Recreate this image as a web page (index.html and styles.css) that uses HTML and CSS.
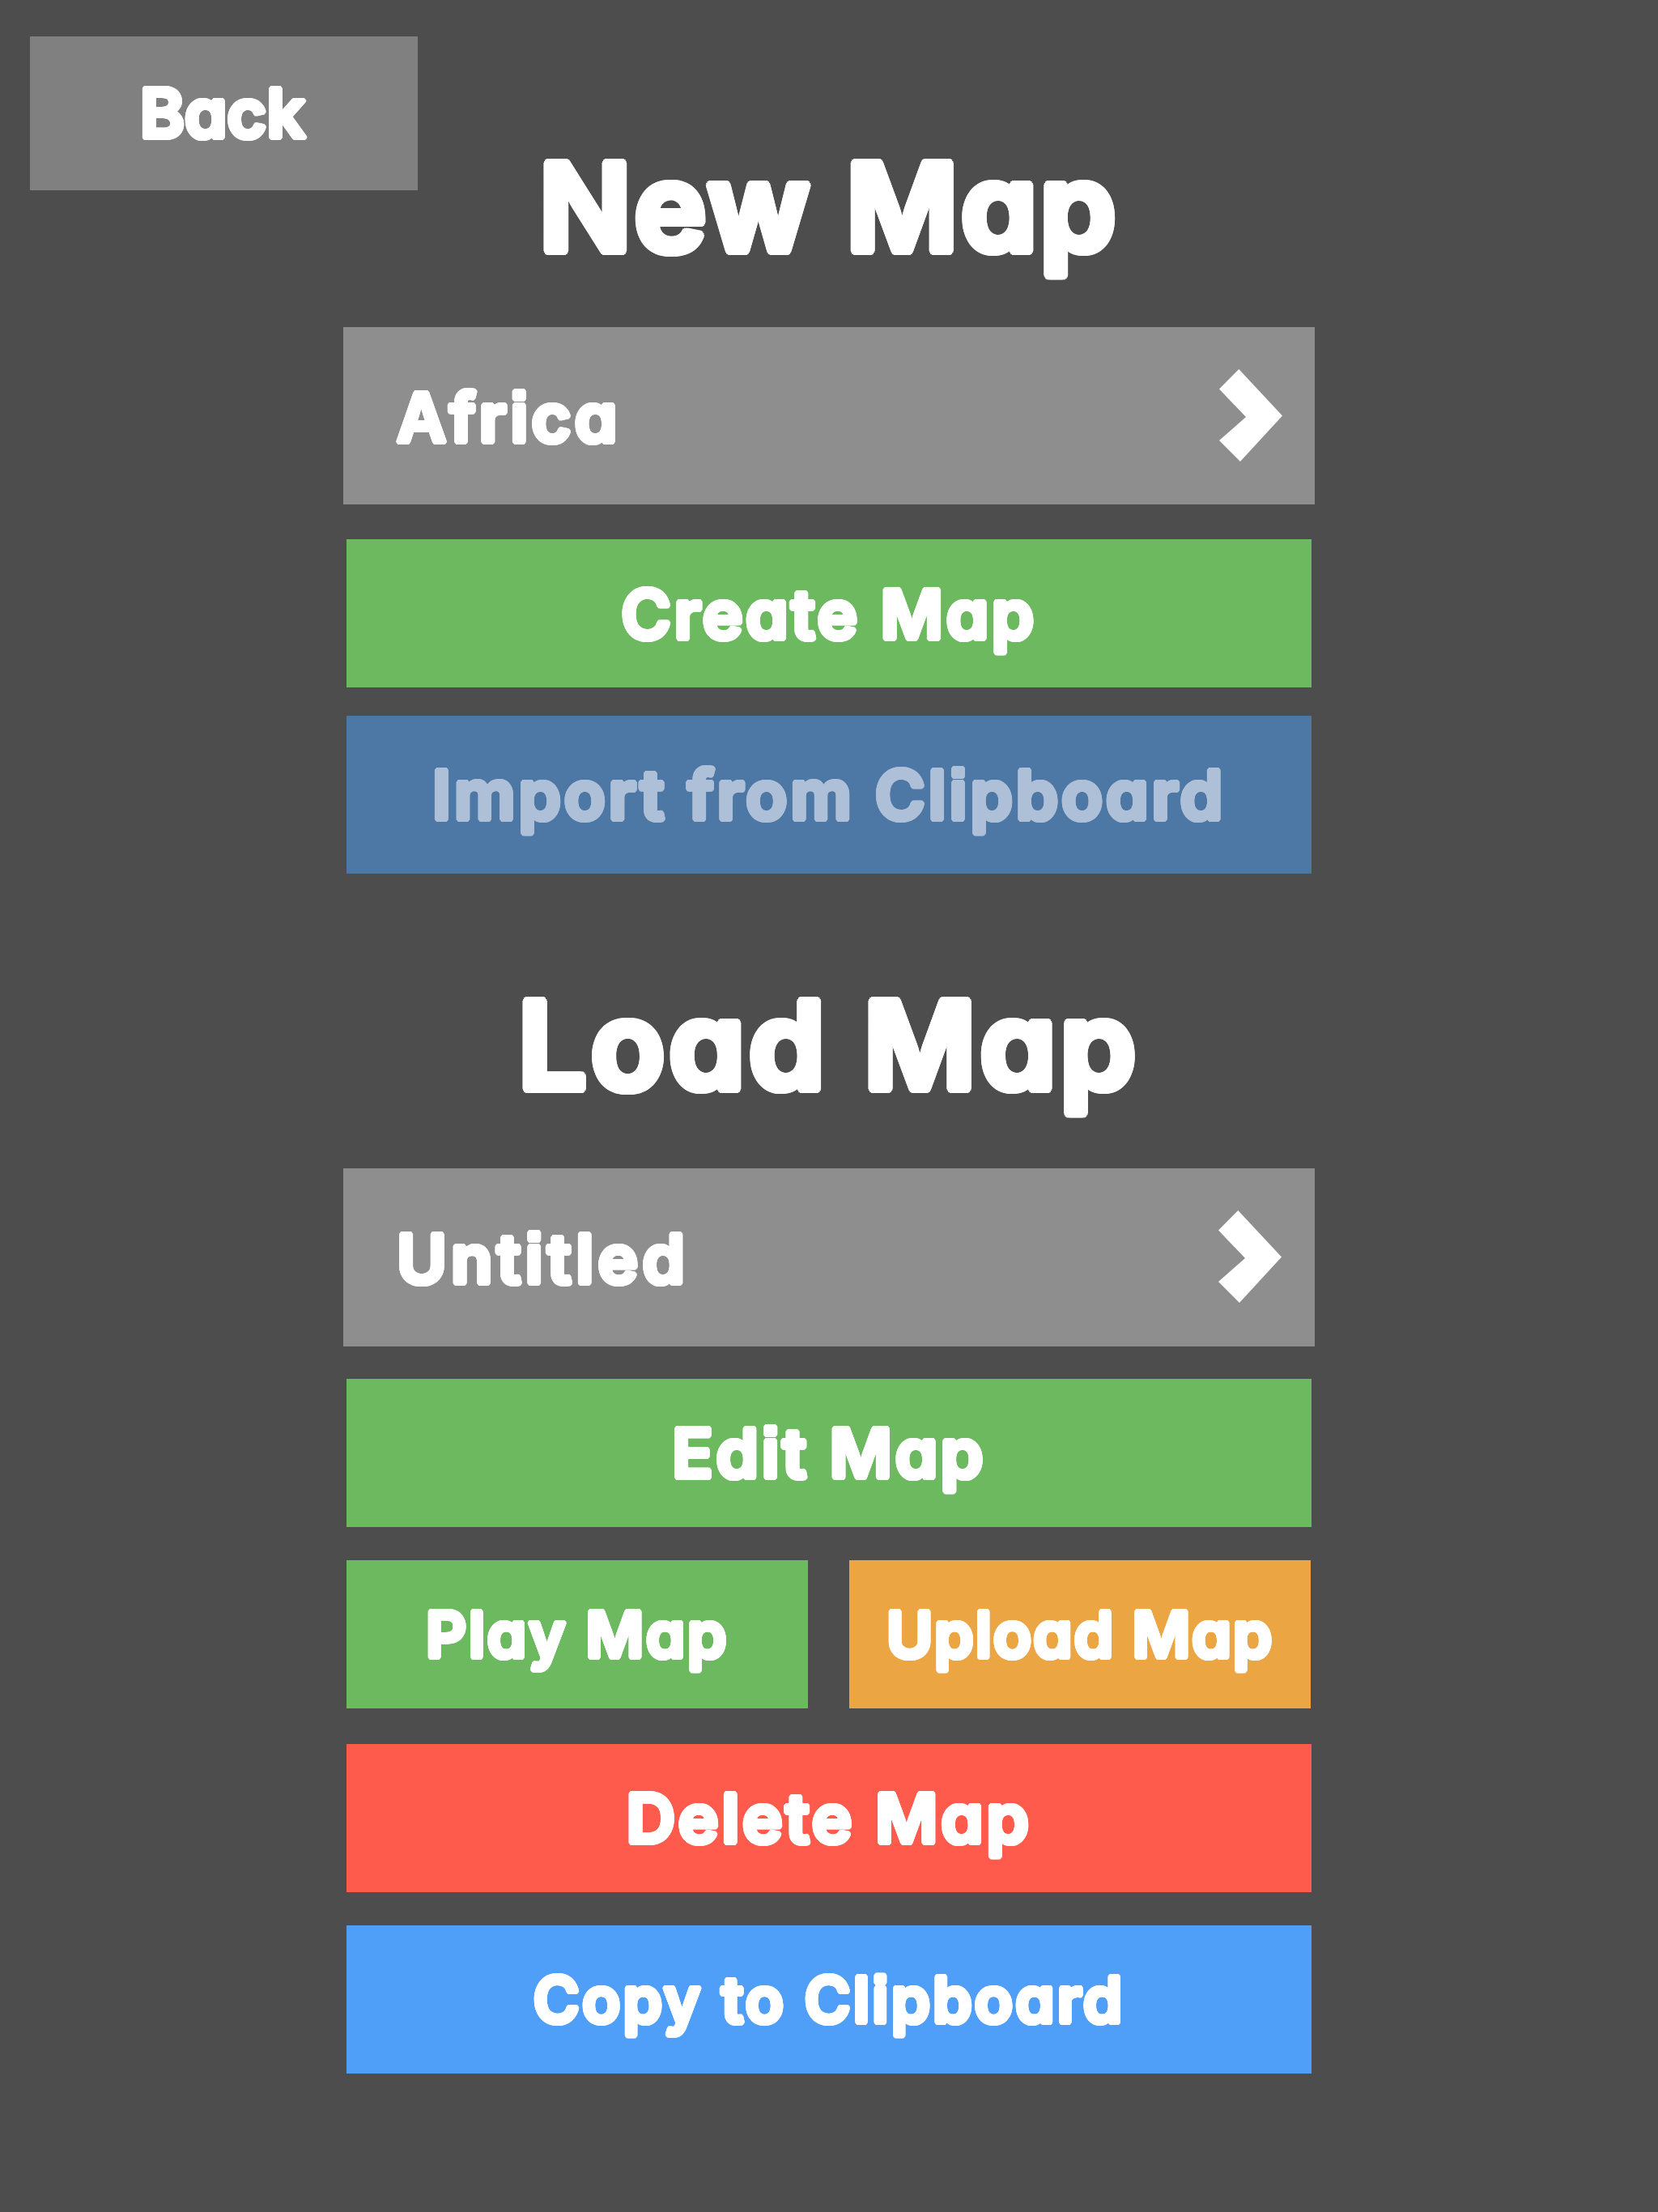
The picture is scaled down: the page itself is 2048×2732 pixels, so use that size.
FILE: index.html
```
<!DOCTYPE html>
<html lang="en">

<head>
  <meta charset="UTF-8">
  <title>Map Editor</title>
  <link rel="stylesheet" href="styles.css">
</head>

<body>
  <div class="page">
    <button class="btn back"><span>Back</span></button>

    <main class="menu">
      <h1 class="title title-new"><span>New Map</span></h1>
      <button class="select select-new">
        <span>Africa</span>
        <svg class="arrow" viewBox="0 0 78 115"><path d="M24.3 0 78 57.5 26 114 0 88 33 59 0 24.5Z" /></svg>
      </button>
      <button class="btn green create"><span>Create Map</span></button>
      <button class="btn import" disabled><span>Import from Clipboard</span></button>

      <h1 class="title title-load"><span>Load Map</span></h1>
      <button class="select select-load">
        <span>Untitled</span>
        <svg class="arrow" viewBox="0 0 78 115"><path d="M24.3 0 78 57.5 26 114 0 88 33 59 0 24.5Z" /></svg>
      </button>
      <button class="btn green edit"><span>Edit Map</span></button>
      <div class="row">
        <button class="btn green play"><span>Play Map</span></button>
        <button class="btn orange upload"><span>Upload Map</span></button>
      </div>
      <button class="btn red delete"><span>Delete Map</span></button>
      <button class="btn blue copy"><span>Copy to Clipboard</span></button>
    </main>
  </div>
</body>

</html>
```
FILE: styles.css
```
* {
  box-sizing: border-box;
}

body {
  margin: 0;
  background: #4d4d4d;
  color: #fff;
  font-family: Inter, "Open Sans", sans-serif;
  font-weight: 600;
  font-feature-settings: "cv11", "ss07";
}

.page {
  display: grid;
  grid-template-columns: 424px 1200px 1fr;
  height: 2732px;
}

.menu {
  display: flex;
  flex-direction: column;
}

.btn,
.select {
  display: flex;
  align-items: center;
  border: none;
  border-radius: 0;
  padding: 0;
  font: inherit;
  font-feature-settings: inherit;
  font-size: 84px;
  line-height: 1;
  color: #fff;
  white-space: nowrap;
}

/* rounds off and fattens the letters */
.title span,
.btn span,
.select span {
  text-shadow:
    0.036em 0 currentColor, -0.036em 0 currentColor,
    0 0.036em currentColor, 0 -0.036em currentColor,
    0.025em 0.025em currentColor, -0.025em 0.025em currentColor,
    0.025em -0.025em currentColor, -0.025em -0.025em currentColor,
    0.033em 0.014em currentColor, -0.033em 0.014em currentColor,
    0.033em -0.014em currentColor, -0.033em -0.014em currentColor,
    0.014em 0.033em currentColor, -0.014em 0.033em currentColor,
    0.014em -0.033em currentColor, -0.014em -0.033em currentColor;
}

.btn {
  justify-content: center;
  height: 183px;
  margin: 0 4px;
}

.back {
  width: 479px;
  height: 190px;
  margin: 45px 0 0 37px;
  padding-right: 3px;
  background: #808080;
}

.title {
  display: flex;
  align-items: center;
  justify-content: center;
  margin: 0;
  font-size: 150px;
  font-weight: 600;
  line-height: 1;
}

.title-new {
  height: 404px;
  padding-top: 108px;
  letter-spacing: 3.8px;
}

.title-load {
  height: 364px;
  padding-top: 60px;
  letter-spacing: 5.2px;
}

.select {
  justify-content: space-between;
  height: 219px;
  padding: 4px 40px 0 66px;
  background: #8e8e8e;
}

.select-new {
  letter-spacing: 4.3px;
}

.select-load {
  height: 220px;
  padding-right: 41px;
  letter-spacing: 5.3px;
}

.arrow {
  width: 78px;
  height: 115px;
  margin-bottom: 5px;
  fill: #fff;
}

.green {
  background: #6cb95f;
}

.orange {
  background: #eca543;
}

.red {
  background: #ff5b4c;
}

.blue {
  background: #4f9ff9;
}

.create {
  margin-top: 43px;
  padding-top: 2px;
  letter-spacing: 3.6px;
}

.import {
  height: 195px;
  margin-top: 35px;
  background: #4d77a4;
  color: #aec0d8;
  letter-spacing: 3.9px;
}

.edit {
  margin-top: 40px;
  letter-spacing: 3.7px;
}

.row {
  display: flex;
  justify-content: space-between;
  margin: 41px 5px 0 4px;
}

.play,
.upload {
  width: 570px;
  margin: 0;
  font-size: 78px;
}

.play {
  letter-spacing: 2.5px;
}

.upload {
  letter-spacing: 1.8px;
}

.delete {
  margin-top: 44px;
  letter-spacing: 3.7px;
}

.copy {
  margin-top: 41px;
  font-size: 78px;
  letter-spacing: 2.9px;
}
```
